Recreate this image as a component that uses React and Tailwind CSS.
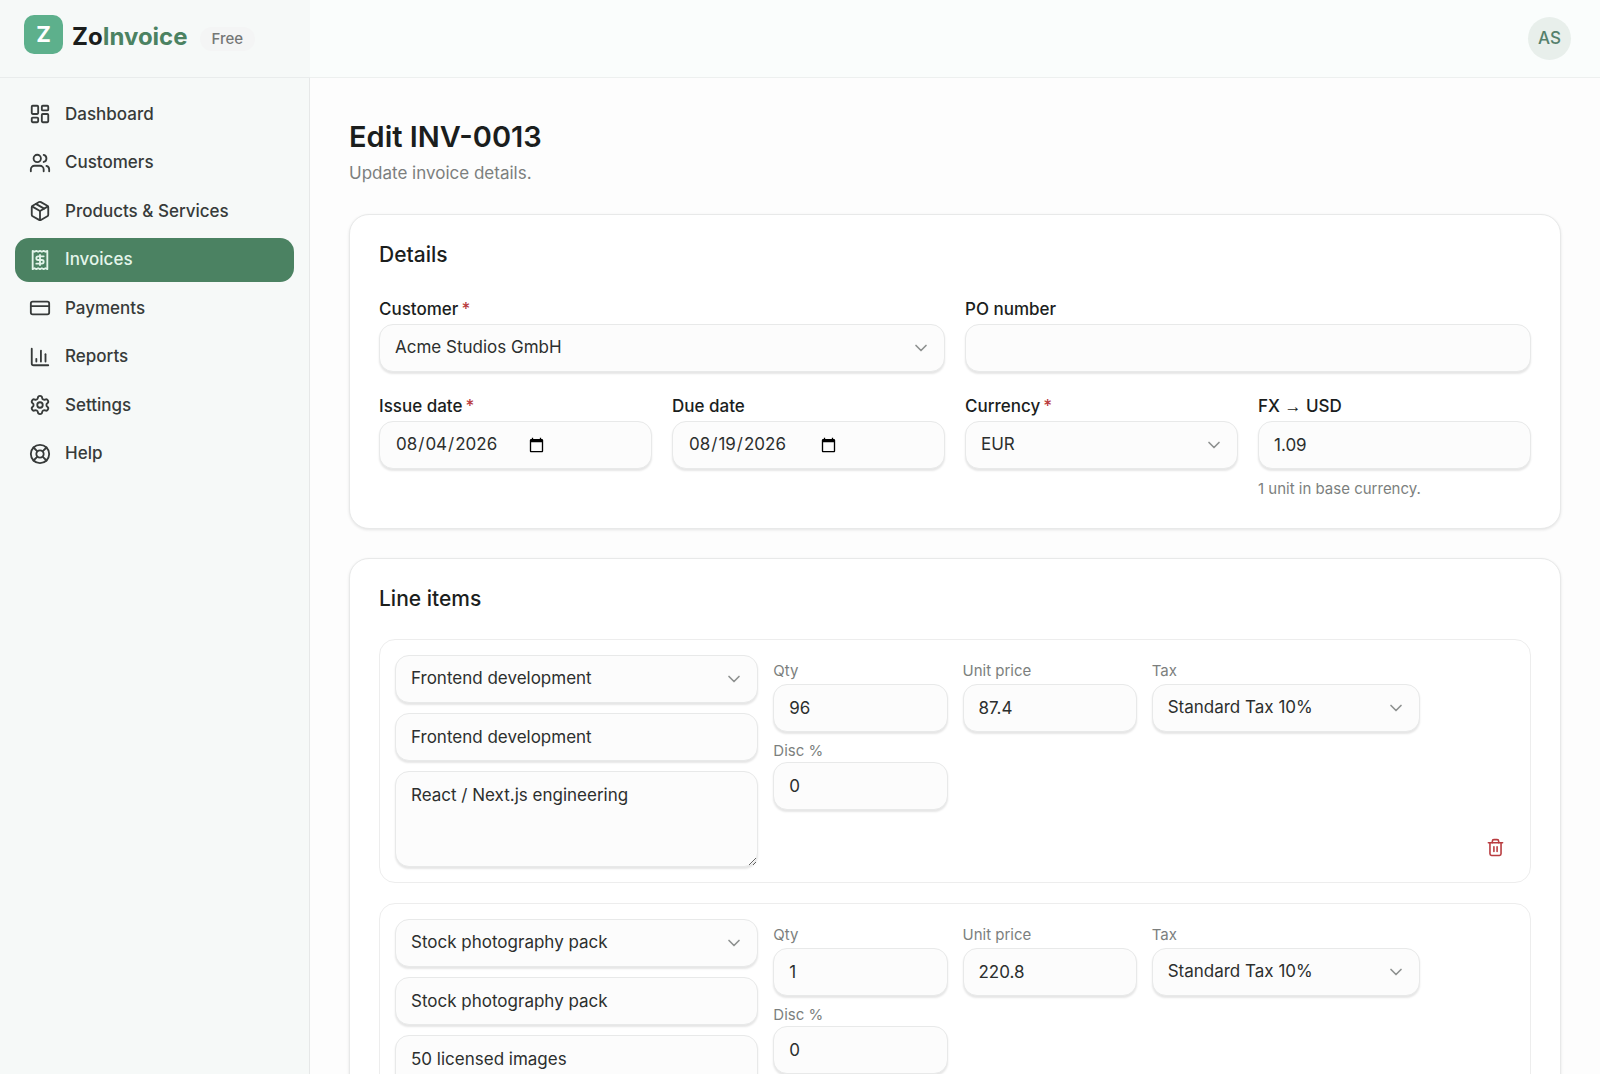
import { useId } from 'react';
import {
  ChartColumn,
  ChevronDown,
  CreditCard,
  LayoutDashboard,
  LifeBuoy,
  Package,
  Receipt,
  Settings,
  Trash2,
  Users,
} from 'lucide-react';
import clsx from 'clsx';

const NAV = [
  { label: 'Dashboard', icon: LayoutDashboard },
  { label: 'Customers', icon: Users },
  { label: 'Products & Services', icon: Package },
  { label: 'Invoices', icon: Receipt, active: true },
  { label: 'Payments', icon: CreditCard },
  { label: 'Reports', icon: ChartColumn },
  { label: 'Settings', icon: Settings },
  { label: 'Help', icon: LifeBuoy },
];

const LINE_ITEMS = [
  {
    id: 1,
    product: 'Frontend development',
    description: 'React / Next.js engineering',
    qty: 96,
    price: 87.4,
    tax: 'Standard Tax 10%',
    discount: 0,
  },
  {
    id: 2,
    product: 'Stock photography pack',
    description: '50 licensed images',
    qty: 1,
    price: 220.8,
    tax: 'Standard Tax 10%',
    discount: 0,
  },
];

const control =
  'w-full rounded-[14px] border border-[#e8e9e9] bg-[#fcfcfc] px-[15px] text-[17px] text-[#2c2f2e] shadow-[0_2px_2px_rgba(0,0,0,0.1)] outline-none focus:border-[#4b8262]';

export default function App() {
  return (
    <div className="flex h-screen overflow-hidden bg-[#fdfdfd] font-['Inter',sans-serif] text-[#1b1e1d]">
      <Sidebar />
      <div className="flex min-w-0 flex-1 flex-col">
        <header className="flex h-[78px] shrink-0 items-center justify-end border-b border-[#edf0ef] bg-[#fafdfc] px-[29px]">
          <button
            type="button"
            className="flex size-[43px] items-center justify-center rounded-full bg-[#e8efeb] text-[17px] font-medium text-[#55806c]"
          >
            AS
          </button>
        </header>
        <main className="flex-1 overflow-y-auto px-[39px] pt-[38px] pb-10 [scrollbar-width:none]">
          <h1 className="text-[29px] leading-[42px] font-semibold">Edit INV-0013</h1>
          <p className="mt-0.5 text-[17px] leading-[26px] text-[#7c7f7e]">Update invoice details.</p>
          <form className="mt-7 flex flex-col gap-[29px]">
            <Card title="Details">
              <DetailsFields />
            </Card>
            <Card title="Line items">
              <div className="flex flex-col gap-5">
                {LINE_ITEMS.map((item) => (
                  <LineItem key={item.id} item={item} />
                ))}
              </div>
            </Card>
          </form>
        </main>
      </div>
    </div>
  );
}

function Sidebar() {
  return (
    <aside className="flex w-[310px] shrink-0 flex-col bg-[#f6f9f8]">
      <div className="flex h-[78px] shrink-0 items-center border-b border-[#e9ecec] px-6">
        <a href="#" className="flex items-center gap-[9px] pb-2">
          <Logo />
          <span className="pt-1 text-[24px] leading-8 font-bold">
            Zo<span className="text-[#4b8262]">Invoice</span>
          </span>
        </a>
        <span className="ml-3 rounded-full bg-[#f4f5f5] px-3 text-[15px] leading-6 font-medium text-[#747776]">
          Free
        </span>
      </div>
      <nav className="flex-1 border-r border-[#e6e8e8] px-[15px] pt-3">
        <ul className="grid h-[388px] grid-rows-8 items-center">
          {NAV.map(({ label, icon: Icon, active }) => (
            <li key={label}>
              <a
                href="#"
                className={clsx(
                  'flex h-11 items-center gap-[14px] rounded-[14px] px-[14px] text-[17px] font-medium',
                  active ? 'bg-[#4b8262] text-[#e3f5ea]' : 'text-[#373b3a]'
                )}
              >
                <Icon size={22} />
                {label}
              </a>
            </li>
          ))}
        </ul>
      </nav>
    </aside>
  );
}

function Logo() {
  return (
    <span className="flex size-[39px] items-center justify-center rounded-[10px] bg-[#5db08c] text-[22px] font-bold text-white">
      Z
    </span>
  );
}

function Card({ title, children }) {
  return (
    <section className="rounded-[20px] border border-[#e8e9e9] bg-white p-[29px] shadow-[0_1px_3px_rgba(0,0,0,0.1)]">
      <h2 className="mb-[29px] text-[21px] leading-[22px] font-medium">{title}</h2>
      {children}
    </section>
  );
}

function DetailsFields() {
  return (
    <div className="grid grid-cols-4 gap-5">
      <Field label="Customer" required className="col-span-2">
        {(id) => <Select id={id} options={['Acme Studios GmbH']} />}
      </Field>
      <Field label="PO number" className="col-span-2">
        {(id) => <Input id={id} />}
      </Field>
      <Field label="Issue date" required>
        {(id) => <DateInput id={id} value="2026-08-04" />}
      </Field>
      <Field label="Due date">{(id) => <DateInput id={id} value="2026-08-19" />}</Field>
      <Field label="Currency" required>
        {(id) => <Select id={id} options={['EUR']} />}
      </Field>
      <Field
        label={
          <>
            FX <span className="font-['Liberation_Sans',sans-serif] leading-none font-normal">→</span> USD
          </>
        }
        hint="1 unit in base currency."
      >
        {(id) => <Input id={id} type="number" step="0.01" defaultValue={1.09} />}
      </Field>
    </div>
  );
}

function LineItem({ item }) {
  return (
    <div className="grid grid-cols-12 grid-rows-[auto_1fr] gap-x-[15px] rounded-[16px] border border-[#ededed] p-[15px]">
      <div className="col-span-4 row-span-2 flex flex-col gap-2.5">
        <Select aria-label="Product" options={[item.product]} />
        <Input aria-label="Name" defaultValue={item.product} />
        <textarea
          aria-label="Description"
          defaultValue={item.description}
          className={clsx(control, 'h-24 py-[11px] leading-6')}
        />
      </div>
      <SmallField label="Qty" className="col-span-2 gap-0.5 pt-[5px]">
        {(id) => <Input id={id} type="number" defaultValue={item.qty} />}
      </SmallField>
      <SmallField label="Unit price" className="col-span-2 gap-0.5 pt-[5px]">
        {(id) => <Input id={id} type="number" step="0.1" defaultValue={item.price} />}
      </SmallField>
      <SmallField label="Tax" className="col-span-3 gap-0.5 pt-[5px]">
        {(id) => <Select id={id} options={[item.tax]} />}
      </SmallField>
      <SmallField label="Disc %" className="col-span-2 col-start-5 pt-2">
        {(id) => <Input id={id} type="number" defaultValue={item.discount} />}
      </SmallField>
      <button
        type="button"
        aria-label="Remove line"
        className="col-start-12 flex size-10 items-center justify-center self-end justify-self-end rounded-[10px] text-[#b93c40]"
      >
        <Trash2 size={19} />
      </button>
    </div>
  );
}

function Field({ label, required, hint, className, children }) {
  const id = useId();
  return (
    <div className={className}>
      <label htmlFor={id} className="mb-px block text-[17px] leading-7 font-medium">
        {label}
        {required && <span className="ml-[3px] text-[#b93c40]">*</span>}
      </label>
      {children(id)}
      {hint && <p className="mt-2.5 text-[15px] leading-5 text-[#7c7f7e]">{hint}</p>}
    </div>
  );
}

function SmallField({ label, className, children }) {
  const id = useId();
  return (
    <div className={clsx('flex flex-col', className)}>
      <label htmlFor={id} className="text-[15px] leading-[22px] text-[#7c7f7e]">
        {label}
      </label>
      {children(id)}
    </div>
  );
}

function Input(props) {
  return <input {...props} className={clsx(control, 'h-12')} />;
}

function DateInput({ id, value }) {
  return (
    <input
      id={id}
      type="date"
      defaultValue={value}
      className={clsx(control, 'h-12 [&::-webkit-datetime-edit]:flex-none')}
    />
  );
}

function Select({ options, ...props }) {
  return (
    <div className="relative">
      <select {...props} className={clsx(control, 'h-12 appearance-none pr-10')}>
        {options.map((option) => (
          <option key={option}>{option}</option>
        ))}
      </select>
      <ChevronDown
        size={20}
        className="pointer-events-none absolute inset-y-0 right-[14px] my-auto text-[#8e9190]"
      />
    </div>
  );
}
